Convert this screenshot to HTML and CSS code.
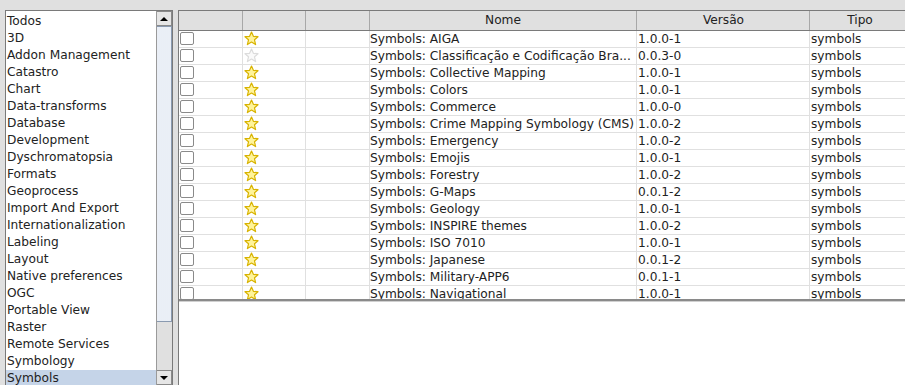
FILE: index.html
```html
<!DOCTYPE html>
<html lang="pt">
  <head>
    <meta charset="UTF-8" />
    <title>Addons</title>
    <link rel="stylesheet" href="styles.css">
  </head>
  <body>
    <div class="window">
      <!-- category list -->
      <div class="category-list">
        <div class="items">
          <div class="item">Todos</div>
          <div class="item">3D</div>
          <div class="item">Addon Management</div>
          <div class="item">Catastro</div>
          <div class="item">Chart</div>
          <div class="item">Data-transforms</div>
          <div class="item">Database</div>
          <div class="item">Development</div>
          <div class="item">Dyschromatopsia</div>
          <div class="item">Formats</div>
          <div class="item">Geoprocess</div>
          <div class="item">Import And Export</div>
          <div class="item">Internationalization</div>
          <div class="item">Labeling</div>
          <div class="item">Layout</div>
          <div class="item">Native preferences</div>
          <div class="item">OGC</div>
          <div class="item">Portable View</div>
          <div class="item">Raster</div>
          <div class="item">Remote Services</div>
          <div class="item">Symbology</div>
          <div class="item selected">Symbols</div>
        </div>
        <div class="scrollbar">
          <div class="arrow up"></div>
          <div class="track">
            <div class="thumb"></div>
          </div>
          <div class="arrow down"></div>
        </div>
      </div>

      <!-- packages table -->
      <div class="packages">
        <div class="table">
          <div class="row header">
            <div class="cell c-check"></div>
            <div class="cell c-star"></div>
            <div class="cell c-blank"></div>
            <div class="cell c-name">Nome</div>
            <div class="cell c-version">Versão</div>
            <div class="cell c-type">Tipo</div>
          </div>
          <div class="body" id="table-body"></div>
        </div>
        <div class="description"></div>
      </div>
    </div>

    <script>
      const packages = [
        ["Symbols: AIGA", "1.0.0-1", true],
        ["Symbols: Classificação e Codificação Bra...", "0.0.3-0", false],
        ["Symbols: Collective Mapping", "1.0.0-1", true],
        ["Symbols: Colors", "1.0.0-1", true],
        ["Symbols: Commerce", "1.0.0-0", true],
        ["Symbols: Crime Mapping Symbology (CMS)", "1.0.0-2", true],
        ["Symbols: Emergency", "1.0.0-2", true],
        ["Symbols: Emojis", "1.0.0-1", true],
        ["Symbols: Forestry", "1.0.0-2", true],
        ["Symbols: G-Maps", "0.0.1-2", true],
        ["Symbols: Geology", "1.0.0-1", true],
        ["Symbols: INSPIRE themes", "1.0.0-2", true],
        ["Symbols: ISO 7010", "1.0.0-1", true],
        ["Symbols: Japanese", "0.0.1-2", true],
        ["Symbols: Military-APP6", "0.0.1-1", true],
        ["Symbols: Navigational", "1.0.0-1", true]
      ];

      const body = document.getElementById("table-body");

      function starIcon(official) {
        const cls = official ? "star" : "star off";
        return '<svg class="' + cls + '" width="15" height="15" viewBox="0 0 15 15">' +
          '<polygon points="7.5,1 9.4,5.3 14,5.7 10.5,8.8 11.6,13.6 7.5,11.1 3.4,13.6 4.5,8.8 1,5.7 5.6,5.3"/>' +
          '</svg>';
      }

      packages.forEach((p) => {
        const row = document.createElement("div");
        row.className = "row";
        row.innerHTML =
          '<div class="cell c-check"><span class="checkbox"></span></div>' +
          '<div class="cell c-star">' + starIcon(p[2]) + '</div>' +
          '<div class="cell c-blank"></div>' +
          '<div class="cell c-name">' + p[0] + '</div>' +
          '<div class="cell c-version">' + p[1] + '</div>' +
          '<div class="cell c-type">symbols</div>';
        body.appendChild(row);
      });
    </script>
  </body>
</html>
```

FILE: styles.css
```css
body {
  margin: 0;
  background-color: #e0e0e0;
  font-family: "DejaVu Sans", sans-serif;
  font-size: 12.2px;
  color: #222;
  overflow: hidden;
}

.window {
  display: flex;
  gap: 5px;
  padding: 10px 0 0 5px;
  height: 385px;
  box-sizing: border-box;
}

/* left list */
.category-list {
  display: flex;
  width: 168px;
  height: 376px;
  border: 1px solid #7a7a7a;
  background-color: white;
  box-sizing: border-box;
}

.items {
  flex: 1;
  padding-top: 2px;
  overflow: hidden;
}

.item {
  height: 17px;
  line-height: 17px;
  padding-left: 1px;
  white-space: nowrap;
}

.item.selected {
  background-color: #c5d4e8;
}

.scrollbar {
  width: 15px;
  display: flex;
  flex-direction: column;
  background-color: #e0e0e0;
  border-left: 1px solid #9a9a9a;
}

.arrow {
  height: 15px;
  display: flex;
  justify-content: center;
  align-items: center;
  background-color: #e6e6e6;
  border: 1px solid #8a8a8a;
  box-sizing: border-box;
  border-left: none;
}

.arrow::after {
  content: "";
  border-left: 4px solid transparent;
  border-right: 4px solid transparent;
}

.arrow.up::after {
  border-bottom: 4px solid black;
}

.arrow.down::after {
  border-top: 4px solid black;
}

.track {
  flex: 1;
  display: flex;
  flex-direction: column;
}

.thumb {
  height: 296px;
  background-color: #bfcde0;
  background-image: radial-gradient(circle, #eef2f8 0.7px, transparent 0.8px);
  background-size: 2px 2px;
  border: 1px solid #8a9ab0;
  border-left: none;
  box-sizing: border-box;
}

/* right panel */
.packages {
  flex: 1;
  display: flex;
  flex-direction: column;
  border-left: 1px solid #7a7a7a;
  border-top: 1px solid #7a7a7a;
  min-width: 0;
}

.table {
  height: 288px;
  overflow: hidden;
  border-bottom: 2px solid #8a8a8a;
  background-color: white;
}

.row {
  display: flex;
  height: 17px;
  border-bottom: 1px solid #e0e0e0;
  box-sizing: border-box;
}

.row.header {
  height: 20px;
  background-color: #e0e0e0;
  border-bottom: 1px solid #7a7a7a;
}

.cell {
  flex-shrink: 0;
  border-right: 1px solid #e0e0e0;
  box-sizing: border-box;
  padding-left: 1px;
  white-space: nowrap;
  overflow: hidden;
  line-height: 16px;
}

.header .cell {
  border-right: 1px solid #a8a8a8;
  text-align: center;
  line-height: 19px;
}

.c-check { width: 64px; }
.c-star { width: 63px; padding-left: 0; }
.c-blank { width: 64px; }
.c-name { width: 267px; padding-left: 0; }
.c-version { width: 173px; }
.c-type { width: 100px; }

.checkbox {
  display: block;
  width: 12px;
  height: 11px;
  margin-top: 1px;
  border: 1px solid #8a8a8a;
  border-radius: 2px;
  background-color: white;
}

.star {
  display: block;
  margin-left: 1px;
}

.star polygon {
  fill: #fff49a;
  stroke: #d8b300;
  stroke-width: 1.2;
  stroke-linejoin: round;
}

.star.off polygon {
  fill: #fafafa;
  stroke: #dcdcdc;
}

.description {
  flex: 1;
  background-color: white;
  border-top: 1px solid #d0d0d0;
}
```
